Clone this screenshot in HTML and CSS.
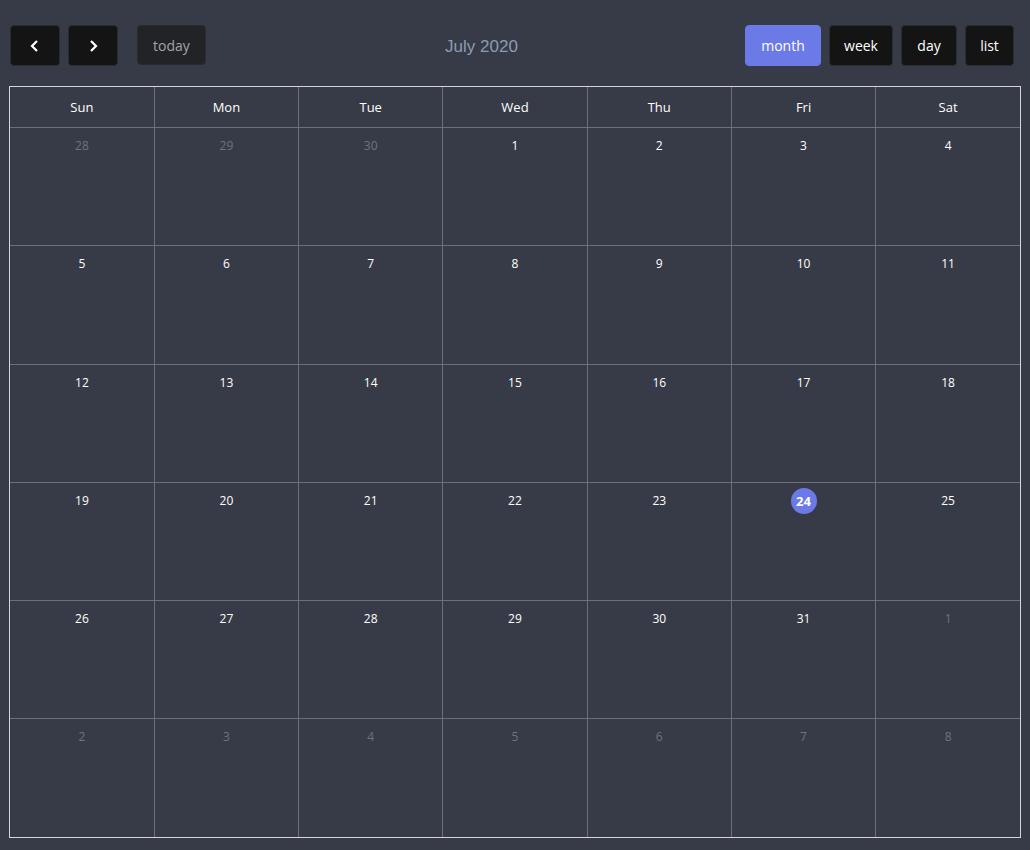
FILE: index.html
```html
<!DOCTYPE html>
<html>
<head>
<meta charset="utf-8">
<link rel="stylesheet" href="styles.css">
</head>
<body>
<div class="cal">
  <div class="toolbar">
    <div class="group">
      <button class="btn nav" aria-label="prev"><svg width="12" height="14" viewBox="0 0 12 14"><path d="M8 2 L3 7 L8 12" fill="none" stroke="#fff" stroke-width="2.2"/></svg></button>
      <button class="btn nav" aria-label="next"><svg width="12" height="14" viewBox="0 0 12 14"><path d="M4 2 L9 7 L4 12" fill="none" stroke="#fff" stroke-width="2.2"/></svg></button>
      <button class="btn today">today</button>
    </div>
    <h2 class="title">July 2020</h2>
    <div class="group views">
      <button class="btn active">month</button>
      <button class="btn">week</button>
      <button class="btn">day</button>
      <button class="btn">list</button>
    </div>
  </div>
  <div class="grid-wrap">
    <table class="grid">
      <thead>
        <tr><th>Sun</th><th>Mon</th><th>Tue</th><th>Wed</th><th>Thu</th><th>Fri</th><th>Sat</th></tr>
      </thead>
      <tbody>
        <tr><td class="other"><span>28</span></td><td class="other"><span>29</span></td><td class="other"><span>30</span></td><td><span>1</span></td><td><span>2</span></td><td><span>3</span></td><td><span>4</span></td></tr>
        <tr><td><span>5</span></td><td><span>6</span></td><td><span>7</span></td><td><span>8</span></td><td><span>9</span></td><td><span>10</span></td><td><span>11</span></td></tr>
        <tr><td><span>12</span></td><td><span>13</span></td><td><span>14</span></td><td><span>15</span></td><td><span>16</span></td><td><span>17</span></td><td><span>18</span></td></tr>
        <tr><td><span>19</span></td><td><span>20</span></td><td><span>21</span></td><td><span>22</span></td><td><span>23</span></td><td><span class="now">24</span></td><td><span>25</span></td></tr>
        <tr><td><span>26</span></td><td><span>27</span></td><td><span>28</span></td><td><span>29</span></td><td><span>30</span></td><td><span>31</span></td><td class="other"><span>1</span></td></tr>
        <tr><td class="other"><span>2</span></td><td class="other"><span>3</span></td><td class="other"><span>4</span></td><td class="other"><span>5</span></td><td class="other"><span>6</span></td><td class="other"><span>7</span></td><td class="other"><span>8</span></td></tr>
      </tbody>
    </table>
  </div>
</div>
</body>
</html>
```
FILE: styles.css
```css
html, body {
  margin: 0;
  padding: 0;
  background: #373b47;
}
body {
  font-family: "Open Sans", "Noto Sans", sans-serif;
  color: #fff;
}
.cal {
  padding: 25px 9px 12px 9px;
}
.toolbar {
  display: flex;
  align-items: center;
  justify-content: space-between;
  margin-bottom: 20px;
  padding: 0 7px 0 1px;
}
.group {
  display: flex;
  gap: 8px;
}
.btn {
  font-family: "Open Sans", "Noto Sans", sans-serif;
  height: 41px;
  padding: 0 14px;
  background: #141414;
  border: 1px solid #2c2c2e;
  border-radius: 4px;
  color: #fff;
  font-size: 14px;
  display: flex;
  align-items: center;
  justify-content: center;
}
.btn.nav {
  width: 50px;
  padding: 0;
}
.btn.today {
  margin-left: 11px;
  width: 69px;
  height: 40px;
  background: #222327;
  border-color: #2a2b30;
  color: #a3a3a6;
}
.views .btn:nth-child(2) { width: 64px; }
.views .btn:nth-child(3) { width: 56px; }
.views .btn:nth-child(4) { width: 49px; }
.btn.active {
  width: 76px;
  background: #6c7ae7;
  border-color: #6c7ae7;
}
.title {
  margin: 3px 0 0 12px;
  font-family: "Liberation Sans", Arial, sans-serif;
  font-weight: 400;
  font-size: 17px;
  color: #8c9bb3;
}
.grid-wrap {
  border: 1px solid #d6d6d8;
}
.grid {
  width: 100%;
  border-collapse: collapse;
  table-layout: fixed;
}
.grid th, .grid td {
  border: 1px solid #6d7078;
}
.grid tr:first-child th { border-top: none; }
.grid th:first-child, .grid td:first-child { border-left: none; }
.grid th:last-child, .grid td:last-child { border-right: none; }
.grid tbody tr:last-child td { border-bottom: none; }
.grid th {
  height: 40px;
  font-size: 13px;
  font-weight: 500;
  color: #fff;
  padding: 0;
}
.grid td {
  height: 117.3px;
  vertical-align: top;
  text-align: center;
  padding: 0;
  font-size: 12px;
  font-weight: 500;
}
.grid td span {
  display: inline-block;
  margin-top: 10px;
  line-height: 16px;
}
.grid td.other span {
  color: #6e7280;
}
.grid td span.now {
  margin-top: 5px;
  width: 26px;
  height: 26px;
  line-height: 26px;
  border-radius: 50%;
  background: #6c7ae7;
  font-weight: 700;
  font-size: 13px;
}
```
